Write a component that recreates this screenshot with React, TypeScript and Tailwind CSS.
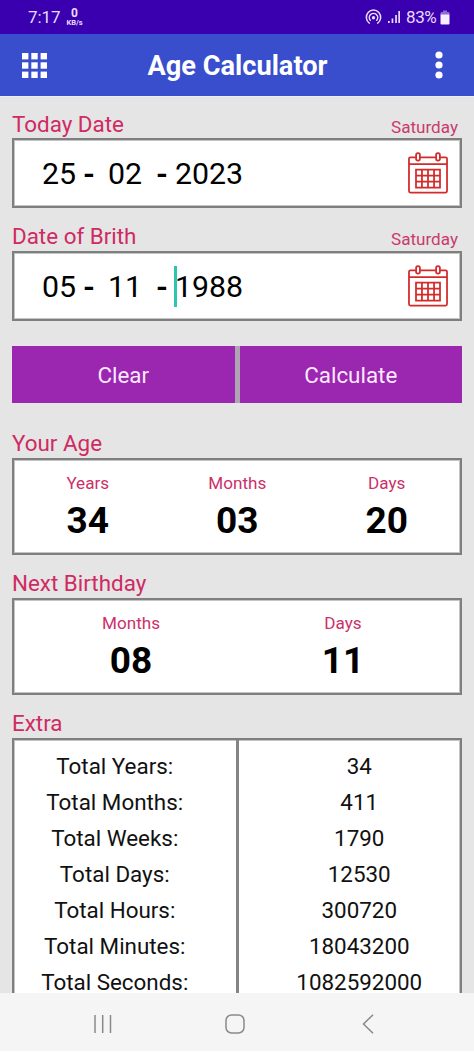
import React from "react";

const totals = [
  ["Total Years:", "34"],
  ["Total Months:", "411"],
  ["Total Weeks:", "1790"],
  ["Total Days:", "12530"],
  ["Total Hours:", "300720"],
  ["Total Minutes:", "18043200"],
  ["Total Seconds:", "1082592000"],
];

function StatusBar() {
  return (
    <div className="flex h-[34px] shrink-0 items-center bg-[#3a00b0] pl-7 pr-[24px] text-[#e9dcff]">
      <span className="w-[38px] text-[17px] leading-none tracking-[-0.1px]">7:17</span>
      <span className="flex w-[17px] flex-col items-center font-bold">
        <span className="text-[12px] leading-[11px]">0</span>
        <span className="whitespace-nowrap text-[7.5px] leading-[7px]">KB/s</span>
      </span>
      <svg className="ml-auto h-4 w-[17px]" viewBox="0 0 17 16" fill="none" stroke="currentColor" strokeWidth="1.5" strokeLinecap="round">
        <path d="M4.3 14.1a7.2 7.2 0 1 1 8.4 0" />
        <path d="M5.3 11.300a4.200 4.200 0 1 1 6.400 0" />
        <circle cx="8.5" cy="8.8" r="1.7" fill="currentColor" stroke="none" />
      </svg>
      <svg className="ml-[5px] h-[14px] w-[14px]" viewBox="0 0 14 14" fill="currentColor">
        <path d="M1 11h1.7v2H1zM4.6 8.5h1.7V13H4.6zM8.2 5h1.7v8H8.2zM11.3 1h1.7v12h-1.7z" />
      </svg>
      <span className="ml-[5px] w-[32px] whitespace-nowrap text-[17px] leading-none tracking-[-0.4px]">83%</span>
      <svg className="ml-[2px] h-[15px] w-[10px]" viewBox="0 0 10 15">
        <path d="M3 .5h4V2h1.500a1 1 0 0 1 1 1v2h-9V3a1 1 0 0 1 1-1H3z" fill="#8f6bd6" />
        <path d="M.5 4.500h9v9a1 1 0 0 1-1 1h-7a1 1 0 0 1-1-1z" fill="#f6eeff" />
      </svg>
    </div>
  );
}

function Header() {
  return (
    <header className="flex h-[62px] shrink-0 items-center justify-between bg-[#384ecd] pl-[22px] pr-[31px] text-white">
      <svg className="h-[25px] w-[25px]" viewBox="0 0 25 25" fill="currentColor">
        {[0, 9.3, 18.6].map((y) =>
          [0, 9.3, 18.6].map((x) => <rect key={`${x}-${y}`} x={x} y={y} width="6.4" height="6.4" />)
        )}
      </svg>
      <h1 className="mr-[7px] pt-[3px] text-[27.2px] font-bold leading-none">Age Calculator</h1>
      <svg className="h-[28px] w-2" viewBox="0 0 8 28" fill="currentColor">
        <circle cx="4" cy="4" r="3.6" />
        <circle cx="4" cy="14" r="3.6" />
        <circle cx="4" cy="24" r="3.6" />
      </svg>
    </header>
  );
}

function CalendarIcon() {
  return (
    <svg className="mb-[3px] h-[42px] w-[40px]" viewBox="0 0 41 43" fill="none" stroke="#d32a2a" strokeWidth="1.8">
      <path d="M8 5.500H2.500a1.500 1.500 0 0 0-1.500 1.500V40a1.500 1.500 0 0 0 1.500 1.500h36A1.500 1.500 0 0 0 40 40V7a1.500 1.500 0 0 0-1.500-1.500H33M12.500 5.500h16M1 12.500h39" />
      <rect x="8.300" y="1.200" width="3.900" height="7.600" rx="1.900" />
      <rect x="28.800" y="1.200" width="3.900" height="7.600" rx="1.900" />
      <path d="M8.200 18h24.600v18.500H8.200zM8.200 24.200h24.600M8.200 30.400h24.600M14.300 18v18.500M20.500 18v18.500M26.700 18v18.500" />
    </svg>
  );
}

function Label({ children }: { children: React.ReactNode }) {
  return <span className="text-[22.4px] leading-6 text-[#cf2a62]">{children}</span>;
}

function DateField(props: { label: string; weekday: string; day: string; month: string; year: string; focused?: boolean }) {
  return (
    <section>
      <div className="flex h-[26px] items-start justify-between pr-[4px]">
        <Label>{props.label}</Label>
        <span className="pt-[3px] text-[17.1px] leading-6 text-[#c93a6c]">{props.weekday}</span>
      </div>
      <div className="flex h-[70px] items-center border-2 border-[#7f7f7f] bg-white pl-[28px] pr-[12px] pt-[2px] text-[30.3px] leading-none text-black shadow-[inset_0_0_0_1px_#c4c4c4]">
        <span className="w-[41px]">{props.day}</span>
        <span className="w-[25px] font-bold">-</span>
        <span className="w-[48px]">{props.month}</span>
        <span className="w-[19px] font-bold">-</span>
        <span className="relative">
          {props.year}
          {props.focused && <span className="absolute -top-[6px] -left-[1px] h-[41px] w-[2.500px] bg-[#2cc5b4]" />}
        </span>
        <span className="ml-auto">
          <CalendarIcon />
        </span>
      </div>
    </section>
  );
}

function ResultCard({ label, items, inset }: { label: string; items: string[][]; inset?: boolean }) {
  return (
    <section className="flex flex-col">
      <Label>{label}</Label>
      <div className={`mt-[3px] flex h-[97px] border-2 border-[#7f7f7f] bg-white pt-[11px] shadow-[inset_0_0_0_1px_#c4c4c4] ${inset ? "px-[11px]" : ""}`}>
        {items.map(([unit, value]) => (
          <div key={unit} className={`flex shrink-0 flex-col items-center ${inset ? "w-[212px]" : "-ml-[2px] w-[151.500px]"}`}>
            <span className="text-[17.1px] leading-6 text-[#cb3069]">{unit}</span>
            <span className="text-[37px] font-bold leading-[51px] text-black">{value}</span>
          </div>
        ))}
      </div>
    </section>
  );
}

export default function App() {
  return (
    <div className="flex h-[1053px] w-[474px] flex-col overflow-hidden bg-[#e5e5e5] font-[Roboto,sans-serif]">
      <StatusBar />
      <Header />
      <main className="flex min-h-0 flex-1 flex-col overflow-hidden border-t border-[#eceffa] pl-3 pr-[12px] pt-[15px]">
        <DateField label="Today Date" weekday="Saturday" day="25" month="02" year="2023" />
        <div className="mt-4 flex flex-col pb-px [&>section>div:first-child]:h-[27px]">
          <DateField label="Date of Brith" weekday="Saturday" day="05" month="11" year="1988" focused />
        </div>
        <div className="mt-[24px] flex h-[57px] shrink-0 gap-[5px] bg-[#b0a3b4] text-[22.4px] text-[#fbe9ff]">
          <button className="flex-1 bg-[#9b26b0] pt-[2px]">Clear</button>
          <button className="flex-1 bg-[#9b26b0] pt-[2px]">Calculate</button>
        </div>
        <div className="mt-7 flex flex-col gap-4">
          <ResultCard label="Your Age" items={[["Years", "34"], ["Months", "03"], ["Days", "20"]]} />
          <ResultCard label="Next Birthday" items={[["Months", "08"], ["Days", "11"]]} inset />
          <section className="flex flex-col">
            <Label>Extra</Label>
            <div className="mt-[3px] flex h-[300px] border-2 border-[#7f7f7f] bg-white text-[22.4px] leading-[22px] text-[#111] shadow-[inset_0_0_0_1px_#c4c4c4]">
              <div className="flex flex-1 flex-col gap-[14px] border-r-[3px] border-[#858585] pr-[20px] pt-[15px] text-center">
                {totals.map(([name]) => <div key={name}>{name}</div>)}
              </div>
              <div className="flex flex-1 flex-col gap-[14px] pl-[20px] pt-[15px] text-center">
                {totals.map(([name, value]) => <div key={name}>{value}</div>)}
              </div>
            </div>
          </section>
        </div>
      </main>
      <nav className="flex h-[60px] shrink-0 items-center border-b-2 border-white bg-[#f5f5f5] pl-[93px]">
        <svg className="mt-[3px] h-5 w-5" viewBox="0 0 20 20" stroke="#8a8a8a" strokeWidth="1.500">
          <path d="M2 1v18M9.700 1v18M17.500 1v18" />
        </svg>
        <svg className="ml-[112px] mt-[3px] h-5 w-5" viewBox="0 0 20 20" fill="none" stroke="#8a8a8a" strokeWidth="1.500">
          <rect x="1" y="1" width="18" height="18" rx="5.500" />
        </svg>
        <svg className="ml-[117px] mt-[3px] h-5 w-3" viewBox="0 0 12 20" fill="none" stroke="#8a8a8a" strokeWidth="1.500">
          <path d="M11 .8 1.500 10l9.500 9.200" />
        </svg>
      </nav>
    </div>
  );
}
